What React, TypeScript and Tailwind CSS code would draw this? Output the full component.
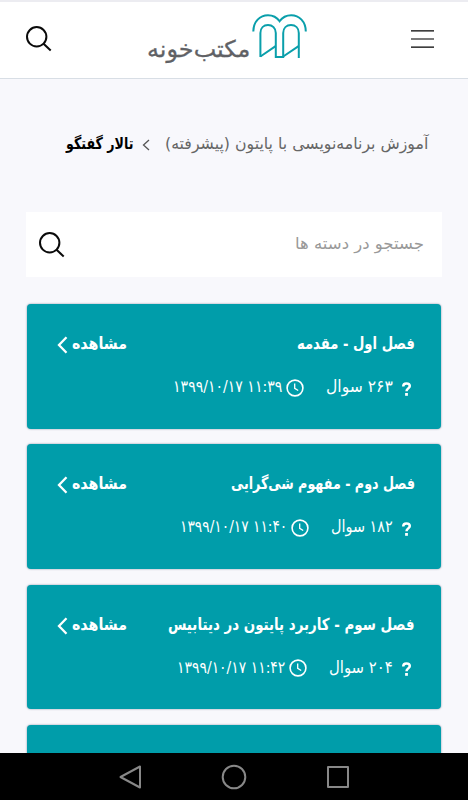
import { useLayoutEffect, useRef, useState } from "react";

type FitProps = { children: string; width: number; className?: string; ltr?: boolean };

// Persian label condensed horizontally so that it fills exactly the given width.
function Fit({ children, width, className = "", ltr = false }: FitProps) {
  const ref = useRef<HTMLSpanElement>(null);
  const [scale, setScale] = useState(1);
  useLayoutEffect(() => {
    if (ref.current) setScale(width / ref.current.offsetWidth);
  }, [width, children]);
  return (
    <span dir="rtl" className={"block shrink-0 whitespace-nowrap " + className} style={{ width }}>
      <span
        ref={ref}
        dir={ltr ? "ltr" : "rtl"}
        className="inline-block origin-right"
        style={{ transform: `scaleX(${scale})` }}
      >
        {children}
      </span>
    </span>
  );
}

function Search() {
  return (
    <svg width="26" height="26" viewBox="0 0 26 26" fill="none" stroke="#0a0a0a" strokeWidth="2">
      <circle cx="10.7" cy="10.8" r="9.7" />
      <path d="M17.3 17.6 24.7 24.6" />
    </svg>
  );
}

function Logo() {
  return (
    <svg width="56" height="46" viewBox="0 0 56 46" fill="none" stroke="#0a9fab" strokeWidth="2">
      <path d="M1.3 18.5C1.3 8.5 8 2.2 16 2.2c5 0 9 2.3 11.6 6 2.6-3.7 6.6-6 11.6-6 8 0 14.6 6.3 14.6 16.3" />
      <path d="M8.4 44V20c0-5 3.3-8 7.6-8s7.8 3 7.8 8v24h7.4V20c0-5 3.4-8 7.8-8s7.8 3 7.8 8v25" />
      <path d="m8.4 43.5 15.2-10.4M31.2 43.5l15.4-10.4" />
    </svg>
  );
}

function Clock() {
  return (
    <svg width="18" height="18" viewBox="0 0 18 18" fill="none" stroke="#fff" strokeWidth="1.6">
      <circle cx="9" cy="9" r="7.9" />
      <path d="M8.7 4.6v4.8l3.5 2.1" strokeWidth="1.3" />
    </svg>
  );
}

const chapters = [
  { title: "فصل اول - مقدمه", tw: 118, count: "۲۶۳ سوال", cw: 67, date: "۱۳۹۹/۱۰/۱۷ ۱۱:۳۹", dw: 109 },
  { title: "فصل دوم - مفهوم شی‌گرایی", tw: 184, count: "۱۸۲ سوال", cw: 62, date: "۱۳۹۹/۱۰/۱۷ ۱۱:۴۰", dw: 107 },
  { title: "فصل سوم - کاربرد پایتون در دیتابیس", tw: 247, count: "۲۰۴ سوال", cw: 64, date: "۱۳۹۹/۱۰/۱۷ ۱۱:۴۲", dw: 108 },
];

export default function App() {
  return (
    <div
      dir="rtl"
      className="flex h-[800px] w-[468px] flex-col overflow-hidden bg-[#f8f8fc] font-['DejaVu_Sans',sans-serif]"
    >
      <header className="flex h-[79px] shrink-0 items-start justify-between border-t-2 border-b border-t-[#ececf1] border-b-[#d8dee5] bg-white pr-[34px] pl-[26px]">
        <svg className="mt-7 shrink-0" width="23" height="19" viewBox="0 0 23 19" fill="none" strokeWidth="1.3">
          <path d="M0 .9h23M0 17.2h23" stroke="#000" />
          <path d="M0 9h23" stroke="#333" />
        </svg>
        <div className="mt-[11px] flex gap-[2px] pr-[8px]">
          <Logo />
          <Fit width={103} className="mt-[20px] text-[23px] leading-[32px] text-[#606165] [-webkit-text-stroke:0.3px_#606165]">
            مکتب‌خونه
          </Fit>
        </div>
        <div className="mt-6">
          <Search />
        </div>
      </header>

      <main className="flex min-h-0 flex-1 flex-col overflow-hidden">
        <nav className="mt-[53px] flex h-6 shrink-0 items-center pr-[40px]">
          <Fit width={263} className="text-[16px] leading-6 text-[#666]">
            آموزش برنامه‌نویسی با پایتون (پیشرفته)
          </Fit>
          <svg className="mt-[2px] mr-[15px] ml-[9px]" width="8" height="12" viewBox="0 0 8 12" fill="none" stroke="#555" strokeWidth="1.3">
            <path d="M7 1 1.5 6 7 11" />
          </svg>
          <Fit width={67} className="text-[16px] leading-6 font-bold text-black">
            تالار گفتگو
          </Fit>
        </nav>

        <div className="mx-[26px] mt-14 flex h-[65px] shrink-0 items-center justify-between bg-white pr-[18px] pl-[13px]">
          <Fit width={129} className="-mt-[2px] text-[16px] leading-6 text-[#999]">
            جستجو در دسته ها
          </Fit>
          <Search />
        </div>

        <div className="mx-[27px] mt-[27px] flex flex-col gap-[15.7px]">
          {chapters.map((c) => (
            <section key={c.title} className="h-[124.6px] shrink-0 rounded-[4px] bg-[#009daa] pt-[28px] pr-[26px] pl-[30px] shadow-[0_0_2px_rgba(60,80,110,0.65)]">
              <div className="flex h-6 items-center justify-between">
                <Fit width={c.tw} className="text-[16.5px] leading-6 font-bold text-white">
                  {c.title}
                </Fit>
                <div className="flex items-center gap-[4px]">
                  <Fit width={55} className="text-[16.5px] leading-6 font-bold text-white">
                    مشاهده
                  </Fit>
                  <svg className="mt-[2px]" width="11" height="18" viewBox="0 0 11 18" fill="none" stroke="#fff" strokeWidth="2.3">
                    <path d="M9.5 1.3 2 9l7.5 7.7" />
                  </svg>
                </div>
              </div>
              <div className="mt-[19px] flex h-6 items-center pr-[3px]">
                <svg className="mt-[3px]" width="11" height="16" viewBox="0 0 11 16" fill="none" stroke="#fff" strokeWidth="2.5">
                  <path d="M2.2 5.4C2.2 3.4 3.4 2.4 5.4 2.4s3.4 1 3.4 2.6c0 2.4-3.3 2.4-3.3 5.2" />
                  <path d="M4.1 13.4h2.8" strokeWidth="2.8" />
                </svg>
                <Fit width={c.cw} className="mr-[8px] text-[16.5px] leading-6 text-white">
                  {c.count}
                </Fit>
                <div className="mt-px mr-[22px] ml-[4px]">
                  <Clock />
                </div>
                <Fit ltr width={c.dw} className="text-[16.5px] leading-6 text-white">
                  {c.date}
                </Fit>
              </div>
            </section>
          ))}
          <section className="h-[125px] shrink-0 rounded-[4px] bg-[#009daa] shadow-[0_0_2px_rgba(60,80,110,0.65)]" />
        </div>
      </main>

      <footer dir="ltr" className="flex h-[47px] shrink-0 items-center bg-black pl-[118px]">
        <svg width="24" height="26" viewBox="0 0 24 26" fill="none" stroke="#888" strokeWidth="2" strokeLinejoin="round">
          <path d="M22 2.5v21L2.5 13Z" />
        </svg>
        <svg className="ml-[79px]" width="26" height="26" viewBox="0 0 26 26" fill="none" stroke="#888" strokeWidth="2">
          <circle cx="13" cy="13" r="11.3" />
        </svg>
        <svg className="ml-[79px]" width="24" height="24" viewBox="0 0 24 24" fill="none" stroke="#888" strokeWidth="2" strokeLinejoin="round">
          <path d="M2 2h20v20H2Z" />
        </svg>
      </footer>
    </div>
  );
}
